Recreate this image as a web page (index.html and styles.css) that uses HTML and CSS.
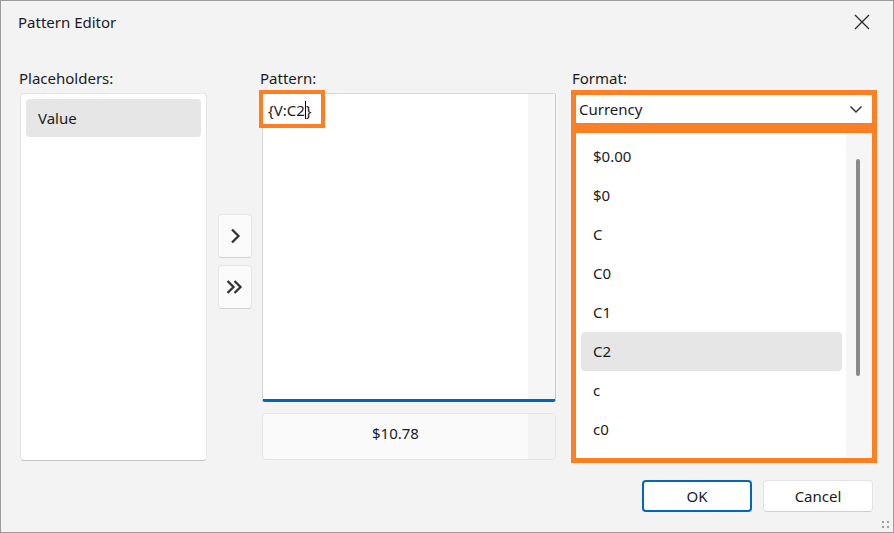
FILE: index.html
```html
<!DOCTYPE html>
<html>
<head>
<meta charset="utf-8">
<link rel="stylesheet" href="styles.css">
</head>
<body>
<div class="window">
  <div class="titlebar">
    <span class="title">Pattern Editor</span>
    <svg class="close" width="18" height="18" viewBox="0 0 18 18"><path d="M2 2 L16 16 M16 2 L2 16" stroke="#2b2b2b" stroke-width="1.3" fill="none"/></svg>
  </div>
  <div class="main">
    <div class="col col-ph">
      <div class="label">Placeholders:</div>
      <div class="phlist">
        <div class="phitem">Value</div>
      </div>
    </div>
    <div class="col col-btn">
      <div class="abtn"><svg width="18" height="18" viewBox="0 0 18 18"><path d="M6 2.5 L12.5 9 L6 15.5" stroke="#333" stroke-width="2.3" fill="none"/></svg></div>
      <div class="abtn"><svg width="22" height="18" viewBox="0 0 22 18"><path d="M3.5 3 L9.5 9 L3.5 15 M10.5 3 L16.5 9 L10.5 15" stroke="#333" stroke-width="2.3" fill="none"/></svg></div>
    </div>
    <div class="col col-pat">
      <div class="label label-pat">Pattern:</div>
      <div class="patbox">
        <div class="pattext">
          <div class="ptext">{V:C2<span class="caret"></span>}</div>
        </div>
        <div class="scrollcol"></div>
        <div class="hl"></div>
      </div>
      <div class="result">
        <div class="rtext">$10.78</div>
        <div class="rscroll"></div>
      </div>
    </div>
    <div class="col col-fmt">
      <div class="label label-fmt">Format:</div>
      <div class="combo">
        <span>Currency</span>
        <svg width="14" height="10" viewBox="0 0 14 10"><path d="M1.5 2.5 L7 8 L12.5 2.5" stroke="#333" stroke-width="1.5" fill="none"/></svg>
      </div>
      <div class="fmtlist">
        <div class="rows">
          <div class="row">$0.00</div>
          <div class="row">$0</div>
          <div class="row">C</div>
          <div class="row">C0</div>
          <div class="row">C1</div>
          <div class="row sel">C2</div>
          <div class="row">c</div>
          <div class="row">c0</div>
        </div>
        <div class="vscroll"><div class="thumb"></div></div>
      </div>
    </div>
  </div>
  <div class="footer">
    <div class="btn ok">OK</div>
    <div class="btn cancel">Cancel</div>
  </div>
  <svg class="grip" width="10" height="10" viewBox="0 0 10 10">
    <rect x="1" y="1" width="2" height="2" fill="#a0a0a0"/>
    <rect x="6" y="1" width="2" height="2" fill="#a0a0a0"/>
    <rect x="1" y="6" width="2" height="2" fill="#a0a0a0"/>
    <rect x="6" y="6" width="2" height="2" fill="#a0a0a0"/>
  </svg>
</div>
</body>
</html>
```

FILE: styles.css
```css
* { box-sizing: border-box; }
html, body { margin: 0; padding: 0; }
body {
  width: 894px;
  height: 533px;
  font-family: "Noto Sans", "Open Sans", sans-serif;
  font-size: 15px;
  color: #1b1b1b;
  background: #f3f3f3;
}
.window {
  position: relative;
  width: 894px;
  height: 533px;
  border: 1px solid #9c9c9c;
  background: #f3f3f3;
  display: flex;
  flex-direction: column;
}
.titlebar {
  height: 42px;
  display: flex;
  align-items: center;
  justify-content: space-between;
  padding: 0 22px 0 17px;
}
.title { line-height: 20px; }
.close { display: block; }
.main {
  display: flex;
  align-items: flex-start;
  padding-left: 18px;
  margin-top: 25px;
  height: 395px;
}
.col { display: flex; flex-direction: column; }
.label { height: 20px; line-height: 20px; margin-bottom: 5px; }
.label-pat { margin-left: -2px; }
.label-fmt { margin-bottom: 2px; margin-left: 1px; }
.col-ph { width: 188px; }
.phlist {
  margin-left: 1px;
  height: 368px;
  background: #fff;
  border: 1px solid #e6e6e6;
  border-bottom-color: #c4c4c4;
  border-radius: 4px;
  padding: 5px;
}
.phitem {
  height: 38px;
  line-height: 38px;
  padding-left: 12px;
  background: #e6e6e6;
  border-radius: 4px;
}
.col-btn {
  width: 34px;
  margin-left: 11px;
  padding-top: 146px;
  gap: 7px;
}
.abtn {
  width: 34px;
  height: 44px;
  background: #fbfbfb;
  border: 1px solid #e6e6e6;
  border-bottom-color: #d2d2d2;
  border-radius: 4px;
  display: flex;
  align-items: center;
  justify-content: center;
}
.col-pat { width: 294px; margin-left: 10px; }
.patbox {
  position: relative;
  height: 309px;
  background: #fff;
  border: 1px solid #d6d6d6;
  border-right-color: #c8c8c8;
  border-bottom: 3px solid #0067c0;
  border-radius: 3px;
  display: flex;
}
.pattext { flex: 1; padding: 6px 0 0 5px; }
.ptext { line-height: 20px; }
.caret {
  display: inline-block;
  width: 1px;
  height: 18px;
  background: #000;
  vertical-align: -3px;
}
.scrollcol { width: 27px; background: #f6f6f6; }
.hl {
  position: absolute;
  left: -4px;
  top: -4px;
  width: 66px;
  height: 38px;
  border: 4px solid #fd7f24;
}
.result {
  margin-top: 11px;
  height: 47px;
  background: #fafafa;
  border: 1px solid #e5e5e5;
  border-radius: 4px;
  display: flex;
}
.rtext { flex: 1; text-align: center; line-height: 38px; }
.rscroll { width: 27px; background: #f3f3f3; border-radius: 0 3px 3px 0; }
.col-fmt { width: 306px; margin-left: 15px; }
.combo {
  height: 38px;
  border: 5px solid #fd7f24;
  background: #fff;
  display: flex;
  align-items: center;
  justify-content: space-between;
  padding: 0 9px 0 3px;
}
.fmtlist {
  height: 335px;
  border: 5px solid #fd7f24;
  background: #fff;
  display: flex;
}
.rows { flex: 1; padding: 4px 4px 0 5px; overflow: hidden; }
.row {
  height: 39px;
  line-height: 39px;
  padding-left: 12px;
  border-radius: 4px;
}
.row.sel { background: #e6e6e6; }
.vscroll { width: 26px; background: #f6f6f6; position: relative; padding-top: 26px; }
.thumb {
  margin-left: 10px;
  width: 4px;
  height: 217px;
  background: #8a8a8a;
  border-radius: 2px;
}
.footer {
  display: flex;
  justify-content: flex-end;
  gap: 11px;
  padding-right: 20px;
  margin-top: 17px;
}
.btn {
  width: 110px;
  height: 32px;
  border-radius: 4px;
  display: flex;
  align-items: center;
  justify-content: center;
  background: #fff;
}
.ok { border: 2px solid #0067c0; }
.cancel { border: 1px solid #e3e3e3; border-bottom-color: #cfcfcf; }
.grip { position: absolute; right: 2px; bottom: 2px; }
```
